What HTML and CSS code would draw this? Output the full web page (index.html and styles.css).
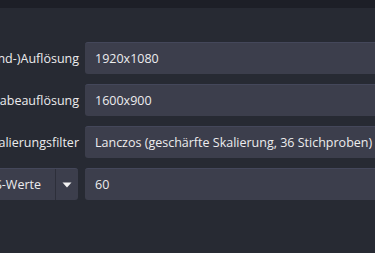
FILE: index.html
```html
<!DOCTYPE html>
<html lang="de">
<head>
<meta charset="utf-8">
<link rel="stylesheet" href="styles.css">
</head>
<body>
<div class="topbar"></div>
<div class="form">
  <div class="row">
    <div class="label"><span>(Leinwand-)Auflösung</span></div>
    <div class="field">1920x1080</div>
  </div>
  <div class="row">
    <div class="label"><span>Ausgabeauflösung</span></div>
    <div class="field">1600x900</div>
  </div>
  <div class="row">
    <div class="label"><span>Skalierungsfilter</span></div>
    <div class="field">Lanczos (geschärfte Skalierung, 36 Stichproben)</div>
  </div>
  <div class="row">
    <div class="label">
      <div class="combo">
        <span class="combo-text">Gängige FPS-Werte</span>
        <span class="combo-btn">
          <svg width="10" height="6" viewBox="0 0 10 6"><path d="M0.5 0.5 L9.5 0.5 L5 5.5 Z" fill="#f2f2f2"/></svg>
        </span>
      </div>
    </div>
    <div class="field">60</div>
  </div>
</div>
</body>
</html>
```
FILE: styles.css
```css
html, body {
  margin: 0;
  padding: 0;
  width: 375px;
  height: 253px;
  overflow: hidden;
  background: #272a33;
  font-family: "Open Sans", "Noto Sans", sans-serif;
  font-size: 12.5px;
  color: #ececee;
}
.topbar {
  height: 8px;
  background: #1d1f27;
}
.form {
  padding-top: 34px;
  display: flex;
  flex-direction: column;
  gap: 10px;
}
.row {
  display: flex;
  height: 32px;
}
.label {
  width: 79px;
  flex: none;
  margin-right: 6px;
  display: flex;
  justify-content: flex-end;
  align-items: center;
  white-space: nowrap;
}
.field {
  flex: 1;
  min-width: 0;
  margin-right: -40px;
  background: #3c3e4c;
  border-radius: 3px;
  border-top: 1px solid #44475a;
  box-sizing: border-box;
  display: flex;
  align-items: center;
  padding-left: 10px;
  white-space: nowrap;
  overflow: hidden;
}
.combo {
  display: flex;
  height: 32px;
  width: 160px;
  flex: none;
  background: #3c3e4c;
  border-radius: 3px;
  margin-right: 1px;
  box-sizing: border-box;
  border-top: 1px solid #44475a;
}
.combo-text {
  flex: 1;
  min-width: 0;
  display: flex;
  align-items: center;
  justify-content: flex-end;
  padding-right: 14px;
  border-right: 1px solid #2d2f3a;
}
.combo-btn {
  width: 22px;
  flex: none;
  display: flex;
  align-items: center;
  justify-content: center;
}
```
